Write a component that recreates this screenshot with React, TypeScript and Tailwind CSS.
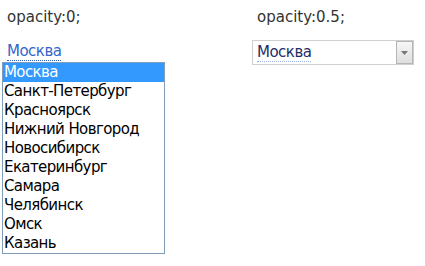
const cities = [
  "Москва",
  "Санкт-Петербург",
  "Красноярск",
  "Нижний Новгород",
  "Новосибирск",
  "Екатеринбург",
  "Самара",
  "Челябинск",
  "Омск",
  "Казань",
];

export default function App() {
  return (
    <div
      className="h-[266px] w-[425px] bg-white pl-[2px] pt-[8px] text-[15px] leading-[19px]"
      style={{ fontFamily: "Tahoma, 'DejaVu Sans', sans-serif" }}
    >
      <div className="flex">
        {/* opacity:0 — the native select is invisible, only the link shows */}
        <div className="relative w-[250px]">
          <div className="pl-[5px] text-[#333]">opacity:0;</div>
          <div className="mt-[15px] pl-[5px] tracking-[-0.5px]">
            <span className="border-b border-dotted border-[#3366cc] text-[#3366cc]">Москва</span>
          </div>
          <ul className="mt-[1px] w-[163px] border border-[#7f9db9] bg-white tracking-[-0.6px] text-black">
            {cities.map((city, i) => (
              <li
                key={city}
                className={
                  i === 0
                    ? "h-[19px] bg-[#3399ff] pl-[1px] text-white"
                    : "h-[19px] pl-[1px]"
                }
              >
                {city}
              </li>
            ))}
          </ul>
        </div>

        {/* opacity:0.5 — select shown half transparent over the link */}
        <div className="w-[170px]">
          <div className="pl-[5px] text-[#333]">opacity:0.5;</div>
          <div className="mt-[13px] flex h-[25px] w-[162px] items-center border border-[#cfcfcf] pl-[4px]">
            <span className="flex-1 tracking-[-0.5px] text-[#1f2f66]">
              <span className="border-b border-dotted border-[#99b3e6]">Москва</span>
            </span>
            <div className="flex h-[23px] w-[17px] items-center justify-center border border-[#b5b5b5] bg-gradient-to-b from-[#f7f7f7] to-[#dedede]">
              <svg width="7" height="4" viewBox="0 0 7 4">
                <path d="M0 0h7L3.5 4z" fill="#777" />
              </svg>
            </div>
          </div>
        </div>
      </div>
    </div>
  );
}
